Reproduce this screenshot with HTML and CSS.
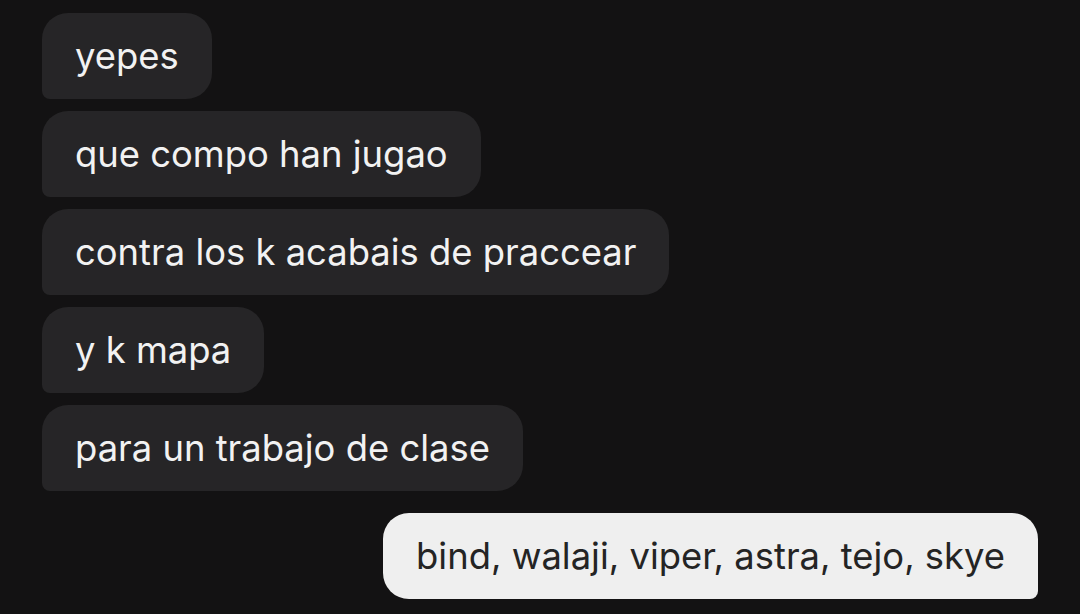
FILE: index.html
```html
<!DOCTYPE html>
<html lang="es">
<head>
    <meta charset="UTF-8">
    <meta name="viewport" content="width=device-width, initial-scale=1.0">
    <title>Chat</title>
    <link rel="stylesheet" href="styles.css">
</head>
<body>

    <div class="chat">
        <div class="msg received">yepes</div>
        <div class="msg received">que compo han jugao</div>
        <div class="msg received">contra los k acabais de praccear</div>
        <div class="msg received">y k mapa</div>
        <div class="msg received">para un trabajo de clase</div>
        <div class="msg sent">bind, walaji, viper, astra, tejo, skye</div>
    </div>

</body>
</html>
```

FILE: styles.css
```css
body {
    font-family: 'Inter', 'Noto Sans', sans-serif;
    background-color: #131213;
    margin: 0;
    padding: 0;
}

.chat {
    display: flex;
    flex-direction: column;
    align-items: flex-start;
    gap: 12px;
    padding: 13px 42px 0 42px;
}

.msg {
    font-size: 36.4px;
    line-height: 44px;
    padding: 21px 33px;
    white-space: nowrap;
}

.received {
    background-color: #262527;
    color: #f2f2f2;
    border-radius: 26px 26px 26px 8px;
}

.sent {
    align-self: flex-end;
    margin-top: 10px;
    background-color: #efefef;
    color: #242424;
    border-radius: 26px 26px 8px 26px;
}
```
